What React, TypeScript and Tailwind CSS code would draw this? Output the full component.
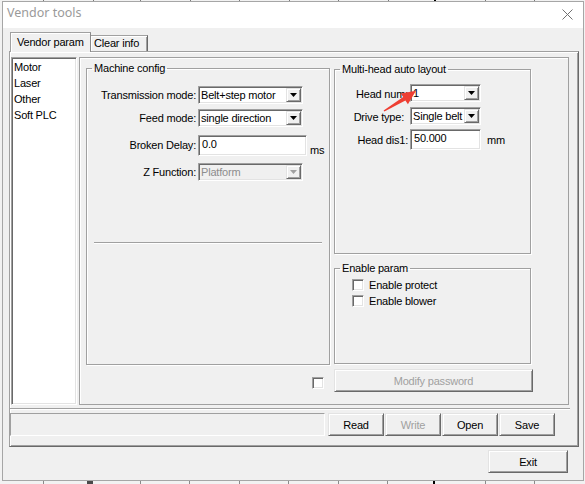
import React from "react";

// Classic Win32 edge styles
const sunken =
  "border border-t-[#a0a0a0] border-l-[#a0a0a0] border-r-white border-b-white shadow-[inset_1px_1px_0_#696969,inset_-1px_-1px_0_#e3e3e3]";
const raised =
  "border border-t-[#e3e3e3] border-l-[#e3e3e3] border-r-[#696969] border-b-[#696969] shadow-[inset_1px_1px_0_#ffffff,inset_-1px_-1px_0_#a0a0a0] bg-[#f0f0f0]";
const etched =
  "border border-[#a0a0a0] shadow-[inset_1px_1px_0_#ffffff,1px_1px_0_#ffffff]";

function DownArrow({ color }: { color: string }) {
  return (
    <svg width="7" height="4" viewBox="0 0 7 4">
      <path d="M0 0h7L3.5 4z" fill={color} />
    </svg>
  );
}

function Combo({
  value,
  className,
  disabled,
}: {
  value: string;
  className: string;
  disabled?: boolean;
}) {
  return (
    <div
      className={`${sunken} ${disabled ? "bg-[#f0f0f0]" : "bg-white"} ${className} h-[18px] p-[1px] flex`}
    >
      <span
        className={`flex-1 pl-[1px] flex items-center whitespace-nowrap overflow-hidden ${disabled ? "text-[#8d8d8d]" : ""}`}
      >
        {value}
      </span>
      <span className={`${raised} w-[15px] h-full flex items-center justify-center shrink-0`}>
        <DownArrow color={disabled ? "#a0a0a0" : "#000000"} />
      </span>
    </div>
  );
}

function Edit({ value, className }: { value: string; className: string }) {
  return (
    <div className={`${sunken} bg-white h-[21px] pl-[3px] pt-[1px] ${className}`}>{value}</div>
  );
}

function Check() {
  return <div className={`${sunken} bg-white w-[12px] h-[12px] shrink-0`} />;
}

function Button({
  label,
  className,
  disabled,
}: {
  label: string;
  className: string;
  disabled?: boolean;
}) {
  return (
    <div
      className={`${raised} h-[23px] flex items-center justify-center ${disabled ? "text-[#a0a0a0]" : ""} ${className}`}
    >
      {label}
    </div>
  );
}

function GroupBox({
  title,
  className,
  children,
}: {
  title: string;
  className: string;
  children?: React.ReactNode;
}) {
  return (
    <fieldset className={`${etched} ${className}`}>
      <legend className="ml-[5px] px-[2px] leading-[14px]">{title}</legend>
      {children}
    </fieldset>
  );
}

export default function App() {
  return (
    <div className="relative w-[585px] h-[484px] overflow-hidden bg-[#f2f2f2] font-['Liberation_Sans',Arial,sans-serif] text-[11px] leading-[14px] tracking-[-0.2px] text-black">
      {/* desktop grid peeking out above the window */}
      <svg width="585" height="1" className="block">
        {[43, 93, 140, 190, 239, 289, 338, 388, 485, 534].map((x) => (
          <rect key={x} x={x} y={0} width={1} height={1} fill="#7a7a7a" />
        ))}
        <rect x={434} y={0} width={2} height={1} fill="#000" />
      </svg>

      <div className="flex h-[480px]">
        <div className="w-[2px]" />
        {/* window frame */}
        <div className="w-[582px] h-full border border-[#a6a6a6] flex flex-col bg-[#f0f0f0]">
          {/* title bar */}
          <div className="h-[26px] bg-white flex items-start justify-between">
            <span className="pl-[4px] pt-[3px] font-['Noto_Sans',sans-serif] text-[12.5px] leading-[16px] tracking-normal text-[#9a9a9a]">
              Vendor tools
            </span>
            <svg width="11" height="11" viewBox="0 0 11 11" className="mt-[7px] mr-[10px]">
              <path d="M0.5 0.5L10.5 10.5M10.5 0.5L0.5 10.5" stroke="#707070" strokeWidth="1" />
            </svg>
          </div>

          {/* client area */}
          <div className="flex-1 flex flex-col pl-[6px] pr-[4px] pt-[4px]">
            {/* tab headers */}
            <div className="relative z-10 -mb-[1px] h-[20px] flex items-end pl-[1px]">
              <div className="w-[81px] h-[20px] bg-[#f0f0f0] border-t border-l border-r border-t-[#a0a0a0] border-l-[#a0a0a0] border-r-[#8a8a8a] shadow-[inset_1px_1px_0_#ffffff] pl-[6px] pt-[2px] whitespace-nowrap">
                Vendor param
              </div>
              <div className="w-[57px] h-[16px] mb-[1px] bg-[#f0f0f0] border-t border-r border-t-[#a0a0a0] border-r-[#696969] shadow-[inset_1px_1px_0_#ffffff,inset_-1px_0_0_#a0a0a0] pl-[3px] whitespace-nowrap">
                Clear info
              </div>
            </div>

            {/* tab page */}
            <div className="w-[570px] h-[396px] border border-t-[#a0a0a0] border-l-[#a0a0a0] border-r-[#696969] border-b-[#696969] shadow-[inset_1px_1px_0_#ffffff,inset_-1px_-1px_0_#a0a0a0] flex flex-col">
              <div className="flex pt-[5px]">
                {/* category list */}
                <div className={`${sunken} ml-[1px] w-[66px] h-[348px] bg-white pl-[2px] pt-[1px] leading-[16px]`}>
                  <div>Motor</div>
                  <div>Laser</div>
                  <div>Other</div>
                  <div>Soft PLC</div>
                </div>

                {/* settings page */}
                <div className="ml-[2px] w-[490px] h-[348px] border border-[#a0a0a0] shadow-[inset_1px_1px_0_#ffffff] flex">
                  {/* left column */}
                  <div className="ml-[6px] w-[244px] flex flex-col">
                    <GroupBox title="Machine config" className="mt-[3px] h-[304px]">
                      <div className="mt-[11px] flex items-center">
                        <span className="w-[109px] text-right">Transmission mode:</span>
                        <Combo value="Belt+step motor" className="ml-[2px] w-[105px]" />
                      </div>
                      <div className="mt-[5px] flex items-center">
                        <span className="w-[109px] text-right">Feed mode:</span>
                        <Combo value="single direction" className="ml-[2px] w-[105px]" />
                      </div>
                      <div className="mt-[6px] flex items-center">
                        <span className="w-[109px] text-right">Broken Delay:</span>
                        <Edit value="0.0" className="ml-[2px] w-[109px]" />
                        <span className="self-start mt-[10px] ml-[3px]">ms</span>
                      </div>
                      <div className="mt-[6px] flex items-center">
                        <span className="w-[109px] text-right">Z Function:</span>
                        <Combo value="Platform" className="ml-[2px] w-[105px]" disabled />
                      </div>
                      <div className="mt-[61px] ml-[7px] w-[228px] h-[2px] border-t border-t-[#a0a0a0] border-b border-b-white" />
                    </GroupBox>
                    <div className="mt-[12px] flex justify-end pr-[6px]">
                      <Check />
                    </div>
                  </div>

                  {/* right column */}
                  <div className="ml-[4px] w-[199px] flex flex-col">
                    <GroupBox title="Multi-head auto layout" className="mt-[4px] w-[197px] h-[192px]">
                      <div className="mt-[8px] flex items-center">
                        <span className="w-[73px] text-right pt-[2px]">Head num:</span>
                        <Combo value="1" className="ml-[2px] w-[71px]" />
                      </div>
                      <div className="mt-[5px] flex items-center">
                        <span className="w-[73px] text-right pr-[4px] pt-[1px]">Drive type:</span>
                        <Combo value="Single belt" className="ml-[2px] w-[71px]" />
                      </div>
                      <div className="mt-[4px] flex items-center">
                        <span className="w-[73px] text-right">Head dis1:</span>
                        <Edit value="50.000" className="ml-[2px] w-[71px]" />
                        <span className="ml-[6px]">mm</span>
                      </div>
                    </GroupBox>
                    <GroupBox title="Enable param" className="mt-[7px] w-[197px] h-[103px]">
                      <div className="mt-[4px] h-[12px] flex items-center pl-[17px]">
                        <Check />
                        <span className="ml-[5px] whitespace-nowrap">Enable protect</span>
                      </div>
                      <div className="mt-[4px] h-[12px] flex items-center pl-[17px]">
                        <Check />
                        <span className="ml-[5px] whitespace-nowrap">Enable blower</span>
                      </div>
                    </GroupBox>
                    <Button label="Modify password" className="mt-[5px] w-[199px]" disabled />
                  </div>
                </div>
              </div>

              <div className="mt-[3px] w-[560px] h-[2px] border-t border-t-[#a0a0a0] border-b border-b-white" />

              {/* status + file actions */}
              <div className="mt-[3px] flex">
                <div className="w-[315px] h-[23px] border border-t-[#a0a0a0] border-l-[#a0a0a0] border-r-white border-b-white" />
                <div className="ml-[3px] flex gap-[1px]">
                  <Button label="Read" className="w-[56px]" />
                  <Button label="Write" className="w-[56px]" disabled />
                  <Button label="Open" className="w-[56px]" />
                  <Button label="Save" className="w-[56px]" />
                </div>
              </div>
            </div>

            <div className="mt-[3px] flex justify-end pr-[11px]">
              <Button label="Exit" className="w-[80px]" />
            </div>
          </div>
        </div>
        <div className="w-[1px]" />
      </div>

      {/* desktop grid below the window */}
      <svg width="585" height="3" className="block">
        {[43, 140, 189, 239, 288, 338, 387, 485, 534].map((x) => (
          <rect key={x} x={x} y={0} width={1} height={3} fill="#8a8a8a" />
        ))}
        <rect x={87} y={0} width={6} height={3} fill="#4a4a4a" />
        <rect x={433} y={0} width={2} height={3} fill="#000" />
      </svg>

      {/* red annotation arrow */}
      <svg
        width="585"
        height="484"
        viewBox="0 0 585 484"
        className="absolute inset-0 pointer-events-none"
      >
        <polygon
          points="384.4,111.6 405.4,100.5 407.9,104.2 416.0,90.8 400.7,93.4 403.2,97.1 383.6,110.4"
          fill="#ee3f33"
        />
      </svg>
    </div>
  );
}
